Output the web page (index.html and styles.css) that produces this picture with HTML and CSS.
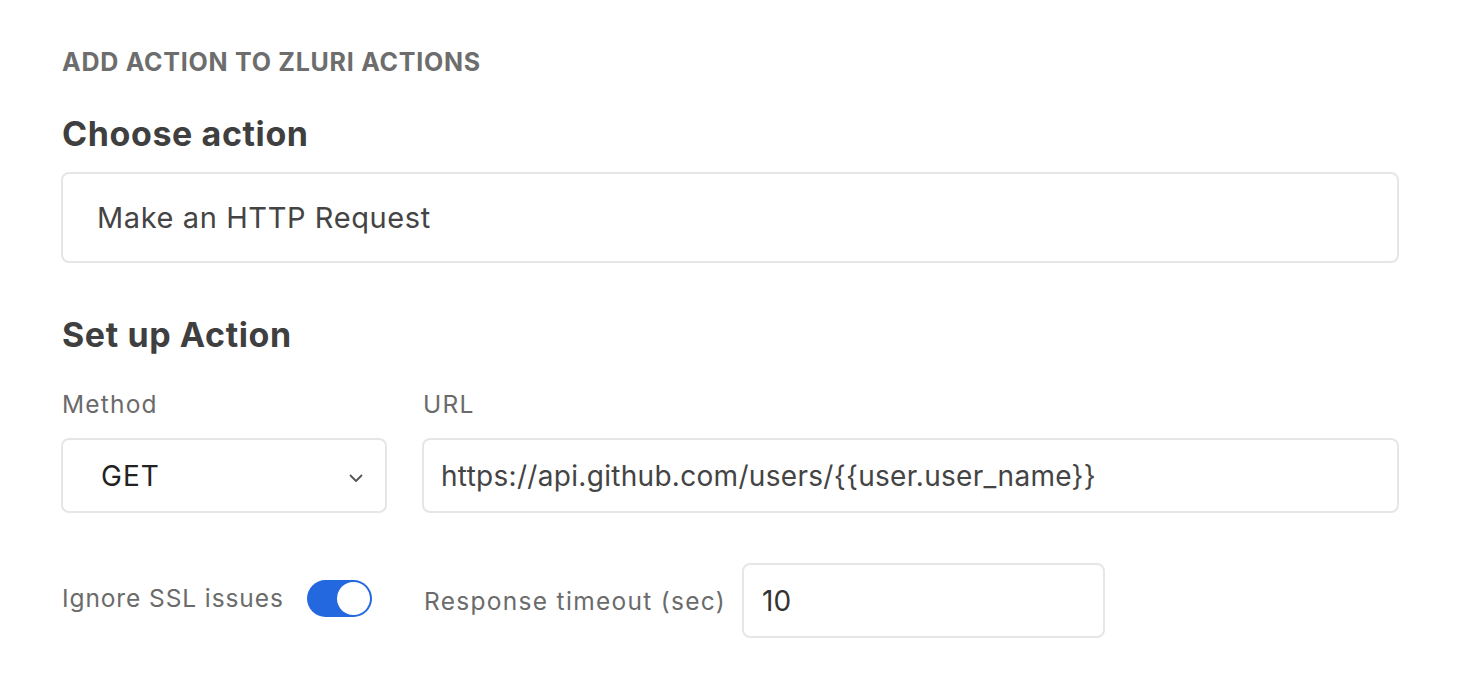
FILE: index.html
```html
<!DOCTYPE html>
<html lang="en">
<head>
<meta charset="utf-8">
<title>Add action</title>
<link rel="stylesheet" href="styles.css">
</head>
<body>
<main class="panel">
  <div class="eyebrow">ADD ACTION TO ZLURI ACTIONS</div>
  <h2 class="section-title first">Choose action</h2>
  <div class="field big">Make an HTTP Request</div>

  <h2 class="section-title second">Set up Action</h2>
  <div class="row">
    <div class="col method">
      <div class="label">Method</div>
      <div class="field select">
        <span class="select-value">GET</span>
        <svg class="chevron" width="14" height="9" viewBox="0 0 14 9"><path d="M1.5 1.5 L7 7 L12.5 1.5" fill="none" stroke="#555" stroke-width="1.8" stroke-linecap="round" stroke-linejoin="round"/></svg>
      </div>
    </div>
    <div class="col url">
      <div class="label">URL</div>
      <div class="field url-field">https://api.github.com/users/{{user.user_name}}</div>
    </div>
  </div>

  <div class="options">
    <div class="option ssl">
      <span class="opt-label">Ignore SSL issues</span>
      <span class="toggle"><span class="knob"></span></span>
    </div>
    <div class="option timeout">
      <span class="opt-label narrow">Response timeout (sec)</span>
      <div class="field small">10</div>
    </div>
  </div>
</main>
</body>
</html>
```

FILE: styles.css
```css
html, body {
  margin: 0;
  padding: 0;
  background: #ffffff;
}
body {
  font-family: Inter, "Noto Sans", "Liberation Sans", sans-serif;
  color: #404040;
}
.panel {
  width: 1338px;
  padding: 46px 0 0 61px;
}
.eyebrow {
  font-size: 25px;
  font-weight: 700;
  color: #6d6d6d;
  line-height: 32px;
  letter-spacing: 0.75px;
  padding-left: 1px;
}
.section-title {
  margin: 0;
  font-size: 34px;
  font-weight: 700;
  color: #3f3f3f;
  line-height: 40px;
  letter-spacing: 0.6px;
  padding-left: 1px;
}
.section-title.first {
  margin-top: 36px;
  margin-bottom: 18px;
}
.section-title.second {
  margin-top: 52px;
  margin-bottom: 34px;
}
.field {
  box-sizing: border-box;
  border: 2px solid #e6e6e6;
  border-radius: 8px;
  background: #fff;
  display: flex;
  align-items: center;
  font-size: 28px;
  color: #444;
}
.field.big {
  height: 91px;
  padding-left: 34px;
  font-size: 29px;
  letter-spacing: 0.6px;
}
.row {
  display: flex;
  gap: 35px;
}
.col.method { width: 326px; }
.col.url { flex: 1; }
.label {
  font-size: 24.5px;
  color: #6b6b6b;
  line-height: 30px;
  margin-bottom: 19px;
  padding-left: 1px;
  letter-spacing: 1.2px;
}
.field.select {
  height: 75px;
  padding-left: 38px;
  padding-right: 22px;
  justify-content: space-between;
  color: #222;
  letter-spacing: 1px;
}
.chevron {
  margin-top: 6px;
}
.field.url-field {
  height: 75px;
  padding-left: 17px;
  letter-spacing: 0.3px;
}
.options {
  display: flex;
  align-items: center;
  margin-top: 50px;
}
.option {
  display: flex;
  align-items: center;
}
.option.ssl {
  width: 362px;
  margin-top: -5px;
}
.opt-label {
  font-size: 24.5px;
  color: #6b6b6b;
  padding-left: 1px;
  letter-spacing: 0.9px;
}
.opt-label.narrow {
  letter-spacing: 1.3px;
  margin-right: 16px;
}
.toggle {
  margin-left: 23px;
  width: 65px;
  height: 37px;
  border-radius: 19px;
  background: #2468e0;
  display: flex;
  align-items: center;
  justify-content: flex-end;
  box-sizing: border-box;
  padding-right: 2px;
}
.knob {
  width: 33px;
  height: 33px;
  border-radius: 50%;
  background: #fff;
}
.field.small {
  width: 363px;
  height: 75px;
  padding-left: 18px;
  color: #333;
}
```
